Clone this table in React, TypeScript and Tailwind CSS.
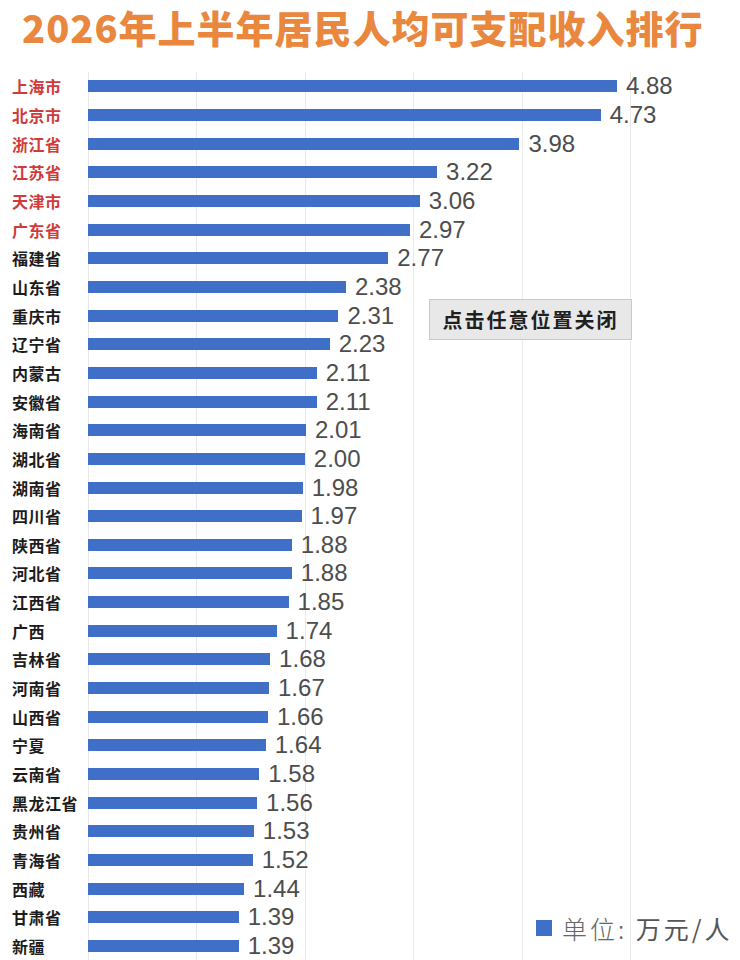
import React from "react";

type Row = { name: string; value: number; top?: boolean };

const rows: Row[] = [
  { name: "上海市", value: 4.88, top: true },
  { name: "北京市", value: 4.73, top: true },
  { name: "浙江省", value: 3.98, top: true },
  { name: "江苏省", value: 3.22, top: true },
  { name: "天津市", value: 3.06, top: true },
  { name: "广东省", value: 2.97, top: true },
  { name: "福建省", value: 2.77 },
  { name: "山东省", value: 2.38 },
  { name: "重庆市", value: 2.31 },
  { name: "辽宁省", value: 2.23 },
  { name: "内蒙古", value: 2.11 },
  { name: "安徽省", value: 2.11 },
  { name: "海南省", value: 2.01 },
  { name: "湖北省", value: 2.0 },
  { name: "湖南省", value: 1.98 },
  { name: "四川省", value: 1.97 },
  { name: "陕西省", value: 1.88 },
  { name: "河北省", value: 1.88 },
  { name: "江西省", value: 1.85 },
  { name: "广西", value: 1.74 },
  { name: "吉林省", value: 1.68 },
  { name: "河南省", value: 1.67 },
  { name: "山西省", value: 1.66 },
  { name: "宁夏", value: 1.64 },
  { name: "云南省", value: 1.58 },
  { name: "黑龙江省", value: 1.56 },
  { name: "贵州省", value: 1.53 },
  { name: "青海省", value: 1.52 },
  { name: "西藏", value: 1.44 },
  { name: "甘肃省", value: 1.39 },
  { name: "新疆", value: 1.39 },
];

// px per 万元
const UNIT = 108.4;
const gridX = [0, 1, 2, 3, 4, 5];

const cjk = { fontFamily: '"Noto Sans CJK SC", "Noto Sans", sans-serif' };
const num = { fontFamily: '"Liberation Sans", Arial, sans-serif' };

export default function App() {
  return (
    <div className="w-[740px] h-[960px] bg-white overflow-hidden relative">
      <div className="h-[72px] pl-[22px] pt-[5px]">
        <h1
          className="text-[38px] leading-[44px] font-black tracking-[1px] text-[#e9873e] whitespace-nowrap"
          style={cjk}
        >
          2026年上半年居民人均可支配收入排行
        </h1>
      </div>

      <div className="relative">
        {/* gridlines */}
        <div className="absolute inset-0 left-[88px] pointer-events-none">
          {gridX.map((k) => (
            <div
              key={k}
              className="absolute top-0 bottom-[-20px] w-px bg-[#e9e9e9]"
              style={{ left: k * UNIT }}
            />
          ))}
        </div>

        <div className="relative flex flex-col">
          {rows.map((r) => (
            <div key={r.name} className="h-[28.67px] flex items-center">
              <div
                className={`w-[88px] pl-[12px] text-[16px] font-bold tracking-[0.5px] whitespace-nowrap ${
                  r.top ? "text-[#d03a3a]" : "text-[#1c1c1c]"
                }`}
                style={cjk}
              >
                {r.name}
              </div>
              <div className="flex items-center">
                <div
                  className="h-[12px] bg-[#3f6fc6]"
                  style={{ width: r.value * UNIT }}
                />
                <span
                  className="ml-[9px] text-[24px] leading-none text-[#4d4d4d]"
                  style={num}
                >
                  {r.value.toFixed(2)}
                </span>
              </div>
            </div>
          ))}
        </div>
      </div>

      {/* close hint */}
      <div
        className="absolute left-[429px] top-[299px] w-[203px] h-[41px] flex items-center justify-center bg-[#e8e8e8] border border-[#c9c9c9] text-[20px] font-semibold tracking-[2px] text-[#1f1f1f]"
        style={cjk}
      >
        点击任意位置关闭
      </div>

      {/* legend */}
      <div className="absolute left-[536px] top-[914px] flex items-center gap-[10px]">
        <div className="w-[16px] h-[16px] bg-[#3f6fc6]" />
        <div
          className="text-[25px] leading-[28px] tracking-[3px] text-[#555] whitespace-nowrap"
          style={cjk}
        >
          <span className="font-light text-[#666]">单位: </span>
          <span>万元/人</span>
        </div>
      </div>
    </div>
  );
}
